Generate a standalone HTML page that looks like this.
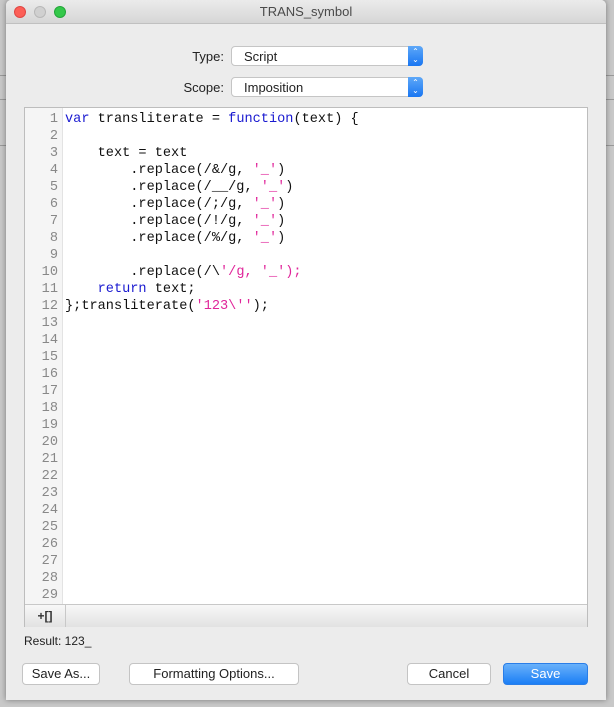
<!DOCTYPE html>
<html><head><style>
body{margin:0;width:614px;height:707px;background:#c8c8c8;position:relative;overflow:hidden;font-family:"Liberation Sans",sans-serif}
.bgl{position:absolute;left:0;right:0;height:1px;background:#999}
.win{position:absolute;left:6px;top:0;width:600px;height:700px;background:#ececec;box-shadow:0 0 6px rgba(0,0,0,.4);border-radius:5px 5px 0 0;overflow:hidden}
.title{height:23px;background:linear-gradient(#ebebeb,#d6d6d6);border-bottom:1px solid #c0c0c0;text-align:center;font-size:13px;line-height:23px;color:#4a4a4a}
.dot{position:absolute;top:6px;width:12px;height:12px;border-radius:50%}
.lbl{position:absolute;font-size:13px;color:#222;text-align:right;width:80px}
.sel{position:absolute;left:225px;width:192px;height:20px;background:#fff;border:1px solid #c5c5c5;border-radius:4px;font-size:13px;line-height:20px;box-sizing:border-box;padding-left:12px;color:#222}
.sel i{position:absolute;right:-1px;top:-1px;width:15px;height:20px;background:linear-gradient(#5ea8f8,#1976f2);border-radius:0 4px 4px 0;color:#fff;font-style:normal;font-size:8px;line-height:8px;text-align:center;padding-top:2px;box-sizing:border-box}
.ed{position:absolute;left:18px;top:107px;width:564px;height:520px;background:#fff;border:1px solid #bdbdbd;box-sizing:border-box}
.gut{position:absolute;left:0;top:0;width:37px;height:496px;background:#f5f5f5;border-right:1px solid #e3e3e3}
pre{margin:0;font-family:"Liberation Mono",monospace;font-size:13.6px;line-height:17px}
.nums{position:absolute;left:0;top:3px;width:33px;text-align:right;color:#888}
.code{position:absolute;left:40px;top:3px;color:#111}
.k{color:#1a1ad0}.s{color:#e0259a}
.bar{position:absolute;left:0;top:496px;width:562px;height:22px;background:linear-gradient(#f8f8f8,#e2e2e2);border-top:1px solid #c8c8c8}
.bar span{position:absolute;left:0;top:0;width:40px;height:22px;border-right:1px solid #c8c8c8;font-size:12px;font-weight:bold;line-height:22px;text-align:center;color:#333}
.btn{position:absolute;top:663px;height:22px;background:#fff;border:1px solid #c4c4c4;border-radius:4px;box-sizing:border-box;font-size:13px;line-height:20px;text-align:center;color:#222}
</style></head><body>
<div class="bgl" style="top:75px"></div><div class="bgl" style="top:99px"></div><div class="bgl" style="top:145px"></div>
<div class="win">
<div class="title">TRANS_symbol</div>
<div class="dot" style="left:8px;background:#fc5f57;border:1px solid #df4744;box-sizing:border-box"></div>
<div class="dot" style="left:28px;background:#d0d0d0;border:1px solid #b8b8b8;box-sizing:border-box"></div>
<div class="dot" style="left:48px;background:#34c84a;border:1px solid #24a53a;box-sizing:border-box"></div>
<div class="lbl" style="left:138px;top:49px">Type:</div>
<div class="sel" style="top:46px">Script<i>⌃<br>⌄</i></div>
<div class="lbl" style="left:138px;top:80px">Scope:</div>
<div class="sel" style="top:77px">Imposition<i>⌃<br>⌄</i></div>
<div class="ed">
<div class="gut"></div>
<pre class="nums">1
2
3
4
5
6
7
8
9
10
11
12
13
14
15
16
17
18
19
20
21
22
23
24
25
26
27
28
29</pre>
<pre class="code"><span class="k">var</span> transliterate = <span class="k">function</span>(text) {

    text = text
        .replace(/&amp;/g, <span class="s">'_'</span>)
        .replace(/__/g, <span class="s">'_'</span>)
        .replace(/;/g, <span class="s">'_'</span>)
        .replace(/!/g, <span class="s">'_'</span>)
        .replace(/%/g, <span class="s">'_'</span>)

        .replace(/\<span class="s">'/g, '_');</span>
    <span class="k">return</span> text;
};transliterate(<span class="s">'123\''</span>);</pre>
<div class="bar"><span>+[]</span></div>
</div>
<div style="position:absolute;left:18px;top:634px;font-size:12px;color:#222">Result: 123_</div>
<div class="btn" style="left:16px;width:78px">Save As...</div>
<div class="btn" style="left:123px;width:170px">Formatting Options...</div>
<div class="btn" style="left:401px;width:84px">Cancel</div>
<div class="btn" style="left:497px;width:85px;background:linear-gradient(#69b1fa,#1b7ef5);border-color:#2a7ee8;color:#fff">Save</div>
</div>
</body></html>
